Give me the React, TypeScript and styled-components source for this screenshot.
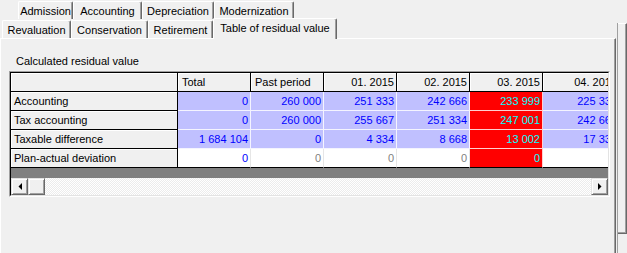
import React from "react";
import styled, { createGlobalStyle } from "styled-components";

const Global = createGlobalStyle`
  html, body { margin: 0; padding: 0; background: #f0f0f0; }
  body { font-family: "Liberation Sans", Arial, sans-serif; font-size: 11px; color: #000; }
`;

const Window = styled.div`
  width: 627px;
  height: 253px;
  display: flex;
  overflow: hidden;
  background: #f0f0f0;
`;

const TabControl = styled.div`
  width: 616px;
  display: flex;
  flex-direction: column;
`;

const TabRow = styled.div<{ $indent: number }>`
  display: flex;
  align-items: flex-end;
  height: 19px;
  padding-left: ${(p) => p.$indent}px;
`;

const Tab = styled.div<{ $w: number; $selected?: boolean }>`
  box-sizing: border-box;
  width: ${(p) => p.$w}px;
  height: ${(p) => (p.$selected ? 21 : 18)}px;
  margin-top: ${(p) => (p.$selected ? -2 : 0)}px;
  margin-bottom: ${(p) => (p.$selected ? -1 : 0)}px;
  position: relative;
  z-index: ${(p) => (p.$selected ? 2 : 1)};
  background: #f0f0f0;
  border-top: 1px solid #fff;
  border-left: 1px solid #fff;
  border-right: 1px solid #696969;
  box-shadow: inset -1px 0 0 #a0a0a0;
  border-radius: 2px 2px 0 0;
  display: flex;
  align-items: center;
  justify-content: center;
  padding-bottom: ${(p) => (p.$selected ? 2 : 0)}px;
  white-space: nowrap;
`;

const Panel = styled.div`
  flex: 1;
  box-sizing: border-box;
  border-top: 1px solid #fff;
  border-left: 1px solid #fff;
  border-right: 1px solid #696969;
  box-shadow: inset -1px 0 0 #a0a0a0;
  padding: 16px 0 0 8px;
  display: flex;
  flex-direction: column;
  align-items: flex-start;
`;

const Caption = styled.div`
  margin-left: 7px;
  height: 13px;
  line-height: 13px;
  margin-bottom: 3px;
`;

const GridFrame = styled.div`
  width: 601px;
  box-sizing: border-box;
  border: 1px solid;
  border-color: #a0a0a0 #fff #fff #a0a0a0;
`;

const GridInner = styled.div`
  border: 1px solid;
  border-color: #000 #e3e3e3 #e3e3e3 #000;
  overflow: hidden;
  display: flex;
  flex-direction: column;
`;

const Table = styled.div`
  display: grid;
  grid-template-columns: 167px repeat(5, 73px) 77px;
  grid-auto-rows: 19px;
  width: 597px;
  overflow: hidden;
`;

const HeadCell = styled.div<{ $align: "left" | "right" }>`
  box-sizing: border-box;
  background: #f0f0f0;
  border-right: 1px solid #000;
  border-bottom: 1px solid #000;
  box-shadow: inset 1px 1px 0 #fff;
  line-height: 18px;
  padding: 0 2px 0 4px;
  text-align: ${(p) => p.$align};
  white-space: nowrap;
`;

const RowHead = styled.div`
  box-sizing: border-box;
  background: #f0f0f0;
  border-right: 1px solid #000;
  border-bottom: 1px solid #000;
  box-shadow: inset 1px 1px 0 #fff;
  line-height: 18px;
  padding-left: 3px;
  white-space: nowrap;
`;

type Tone = "blue" | "white" | "red";

const toneBg: Record<Tone, string> = { blue: "#c0c0ff", white: "#ffffff", red: "#ff0000" };
const toneLine: Record<Tone, string> = { blue: "#f4f4ff", white: "#e6e6e6", red: "#ffd0d0" };

const Cell = styled.div<{ $tone: Tone; $color: string; $last?: boolean }>`
  box-sizing: border-box;
  background: ${(p) => toneBg[p.$tone]};
  color: ${(p) => p.$color};
  border-right: 1px solid ${(p) => toneLine[p.$tone]};
  border-bottom: 1px solid ${(p) => (p.$last ? "#000" : toneLine[p.$tone])};
  line-height: 18px;
  text-align: right;
  padding-right: 2px;
  white-space: nowrap;
`;

const EmptyBand = styled.div`
  height: 10px;
  background: #808080;
`;

const HScroll = styled.div`
  height: 17px;
  display: flex;
  background: repeating-conic-gradient(#ffffff 0 25%, #ececec 0 50%) 0 0 / 2px 2px;
`;

const ScrollButton = styled.div<{ $push?: boolean }>`
  box-sizing: border-box;
  width: 17px;
  height: 17px;
  background: #f0f0f0;
  border: 1px solid;
  border-color: #e3e3e3 #696969 #696969 #e3e3e3;
  box-shadow: inset 1px 1px 0 #fff, inset -1px -1px 0 #a0a0a0;
  display: flex;
  align-items: center;
  justify-content: center;
  margin-left: ${(p) => (p.$push ? "auto" : "0")};
`;

const RightStrip = styled.div`
  width: 11px;
  padding-top: 23px;
  box-sizing: border-box;
  display: flex;
  flex-direction: column;
`;

const OuterEdge = styled.div`
  margin-left: 1px;
  flex: 1;
  border-left: 1px solid #a0a0a0;
  display: flex;
  flex-direction: column;
`;

const OuterBox = styled.div`
  height: 211px;
  box-sizing: border-box;
  border-top: 1px solid #fff;
  border-right: 1px solid #696969;
  border-bottom: 1px solid #696969;
  box-shadow: inset -1px -1px 0 #a0a0a0;
  background: #f0f0f0;
`;

const Arrow = ({ dir }: { dir: "left" | "right" }) => (
  <svg width="4" height="7" viewBox="0 0 4 7">
    {dir === "left" ? (
      <polygon points="4,0 4,7 0.5,3.5" fill="#000" />
    ) : (
      <polygon points="0,0 0,7 3.5,3.5" fill="#000" />
    )}
  </svg>
);

const headers: { label: string; align: "left" | "right" }[] = [
  { label: "", align: "left" },
  { label: "Total", align: "left" },
  { label: "Past period", align: "left" },
  { label: "01. 2015", align: "right" },
  { label: "02. 2015", align: "right" },
  { label: "03. 2015", align: "right" },
  { label: "04. 2015", align: "right" },
];

type Row = { name: string; values: string[]; white?: boolean };

const rows: Row[] = [
  { name: "Accounting", values: ["0", "260 000", "251 333", "242 666", "233 999", "225 333"] },
  { name: "Tax accounting", values: ["0", "260 000", "255 667", "251 334", "247 001", "242 668"] },
  { name: "Taxable difference", values: ["1 684 104", "0", "4 334", "8 668", "13 002", "17 336"] },
  { name: "Plan-actual deviation", values: ["0", "0", "0", "0", "0", ""], white: true },
];

const RED_COL = 4;

export default function App() {
  return (
    <>
      <Global />
      <Window>
        <TabControl>
          <TabRow $indent={18}>
            <Tab $w={55}>Admission</Tab>
            <Tab $w={69}>Accounting</Tab>
            <Tab $w={72}>Depreciation</Tab>
            <Tab $w={80}>Modernization</Tab>
          </TabRow>
          <TabRow $indent={2}>
            <Tab $w={69}>Revaluation</Tab>
            <Tab $w={77}>Conservation</Tab>
            <Tab $w={65}>Retirement</Tab>
            <Tab $w={124} $selected>
              Table of residual value
            </Tab>
          </TabRow>
          <Panel>
            <Caption>Calculated residual value</Caption>
            <GridFrame>
              <GridInner>
                <Table>
                  {headers.map((h, i) => (
                    <HeadCell key={i} $align={h.align}>
                      {h.label}
                    </HeadCell>
                  ))}
                  {rows.map((r, ri) => {
                    const last = ri === rows.length - 1;
                    return (
                      <React.Fragment key={r.name}>
                        <RowHead>{r.name}</RowHead>
                        {r.values.map((v, ci) => {
                          let tone: Tone = r.white ? "white" : "blue";
                          let color = "#0000ff";
                          if (ci === RED_COL) {
                            tone = "red";
                            color = "#00ffff";
                          } else if (r.white && ci > 0) {
                            color = "#808080";
                          }
                          return (
                            <Cell key={ci} $tone={tone} $color={color} $last={last}>
                              {v}
                            </Cell>
                          );
                        })}
                      </React.Fragment>
                    );
                  })}
                </Table>
                <EmptyBand />
                <HScroll>
                  <ScrollButton>
                    <Arrow dir="left" />
                  </ScrollButton>
                  <ScrollButton />
                  <ScrollButton $push>
                    <Arrow dir="right" />
                  </ScrollButton>
                </HScroll>
              </GridInner>
            </GridFrame>
          </Panel>
        </TabControl>
        <RightStrip>
          <OuterEdge>
            <OuterBox />
          </OuterEdge>
        </RightStrip>
      </Window>
    </>
  );
}
